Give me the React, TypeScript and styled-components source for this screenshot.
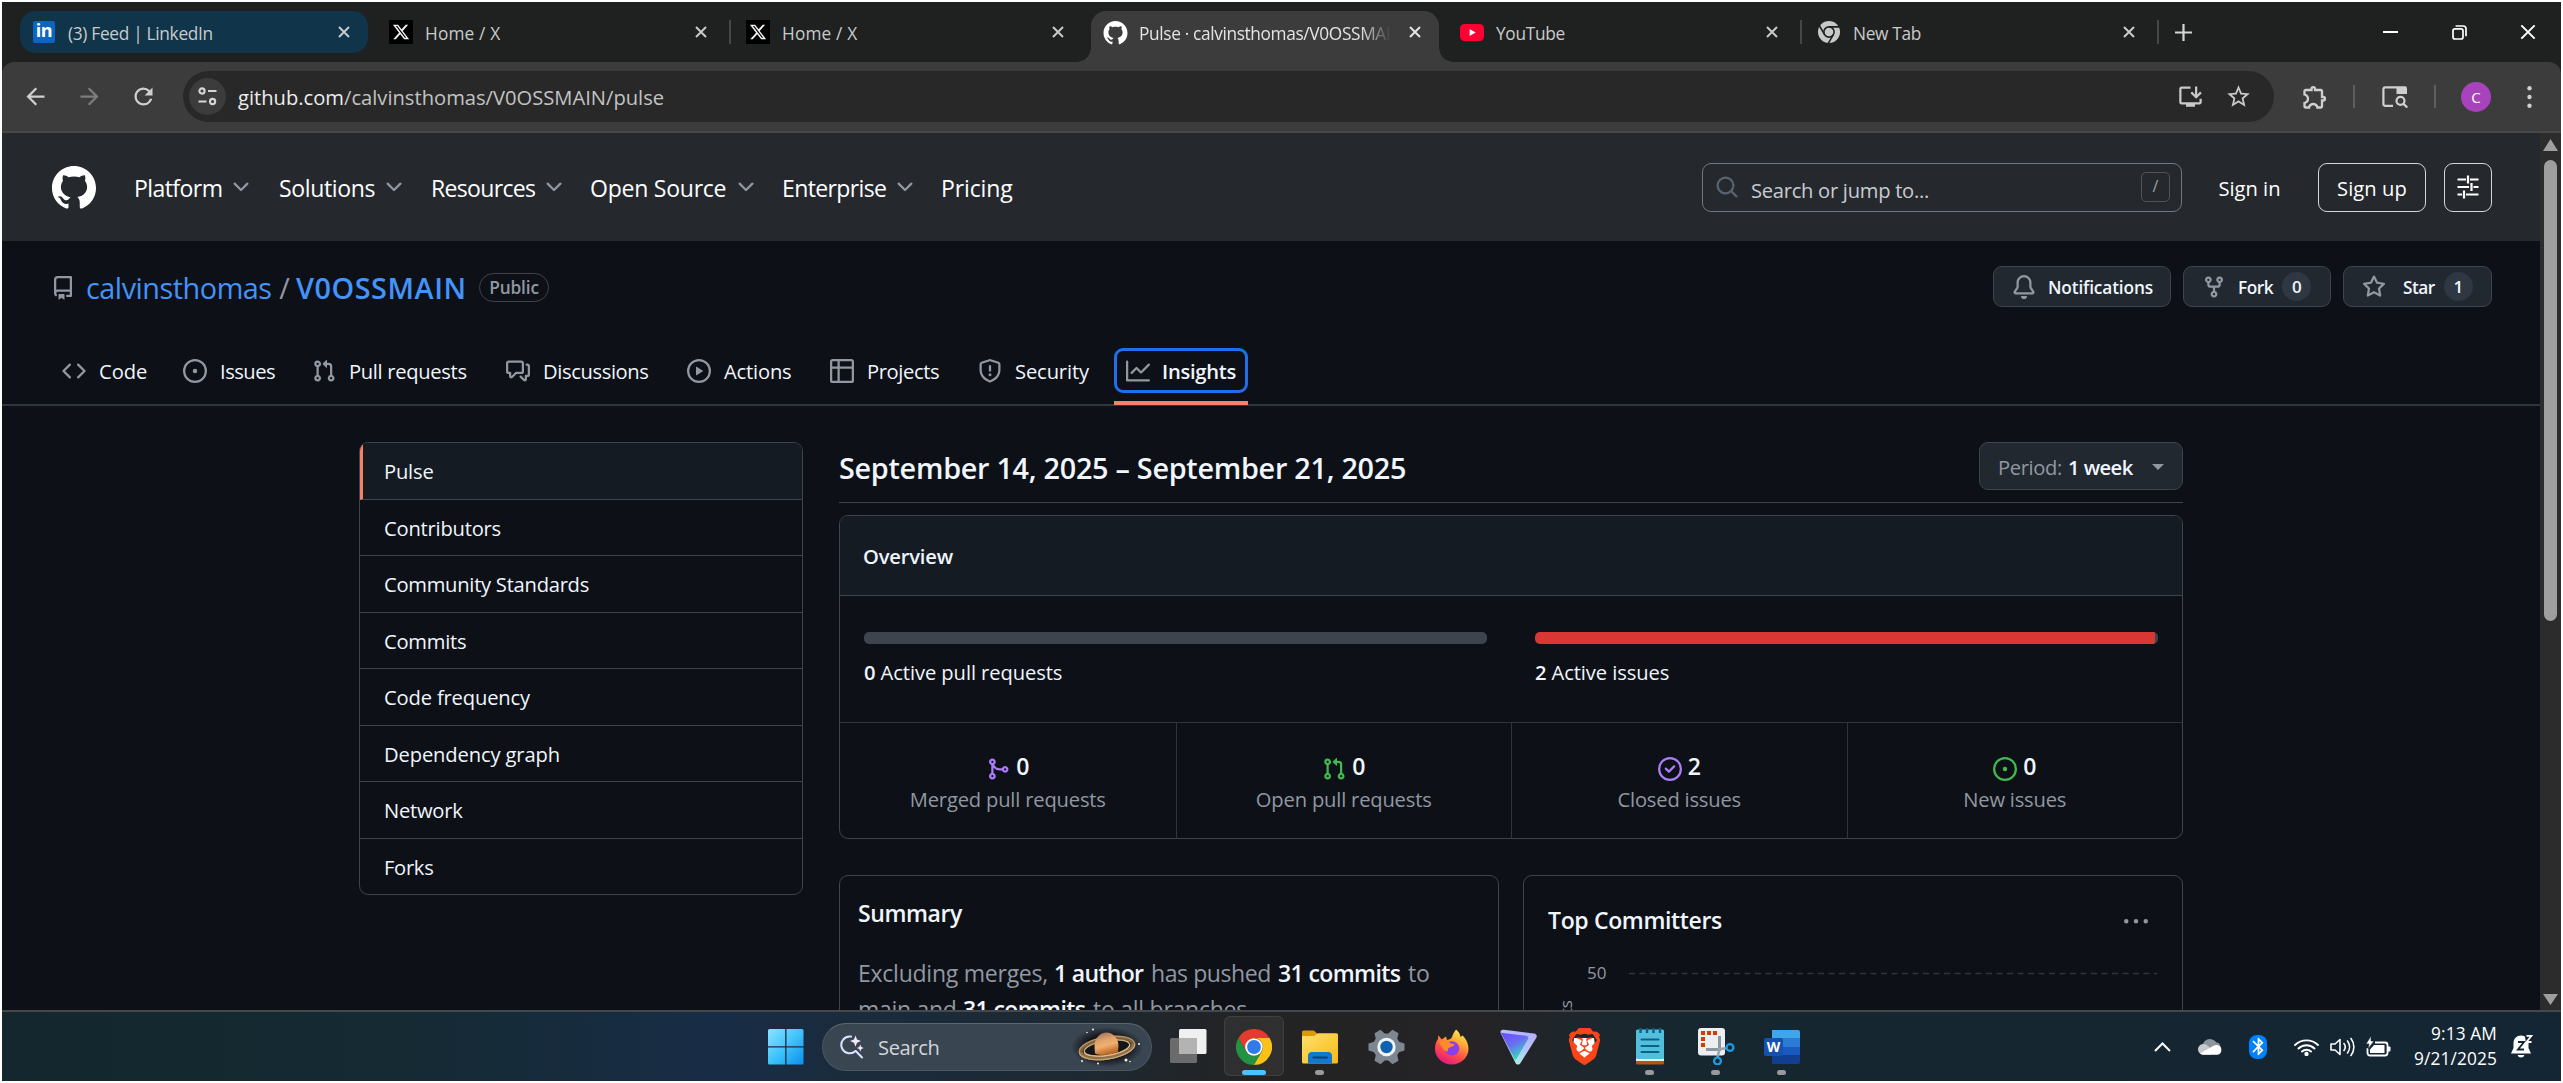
import React from 'react';
import styled, { createGlobalStyle, css } from 'styled-components';
import {
  MdArrowBack,
  MdArrowForward,
  MdRefresh,
  MdOutlineInstallDesktop,
  MdStarBorder,
  MdOutlineExtension,
  MdBluetooth,
} from 'react-icons/md';
import { FaXTwitter } from 'react-icons/fa6';
import { SiBrave } from 'react-icons/si';

/* ---------- base ---------- */

const GlobalStyle = createGlobalStyle`
  * { box-sizing: border-box; }
  body {
    margin: 0;
    background: #fff;
    font-family: "Open Sans", "Noto Sans", sans-serif;
    overflow: hidden;
  }
  svg { display: block; flex: none; }
`;

const Frame = styled.div`
  width: 2563px;
  height: 1083px;
  padding: 2px;
  display: flex;
  flex-direction: column;
  background: #fff;
`;

const Text = styled.span<{ $size: number; $ls?: number; $weight?: number; $color?: string; $w?: number }>`
  font-size: ${(p) => p.$size * 0.96}px;
  letter-spacing: ${(p) => p.$ls ?? 0}px;
  font-weight: ${(p) => p.$weight ?? 400};
  color: ${(p) => p.$color ?? 'inherit'};
  white-space: nowrap;
  ${(p) => p.$w !== undefined && css`width: ${p.$w}px; flex: none;`}
`;

/* ---------- octicons ---------- */

const paths = {
  mark: 'M10.226 17.284c-2.965-.36-5.054-2.493-5.054-5.256 0-1.123.404-2.336 1.078-3.144-.292-.741-.247-2.314.09-2.965.898-.112 2.111.36 2.83 1.01.853-.269 1.752-.404 2.853-.404 1.1 0 1.999.135 2.807.382.696-.629 1.932-1.1 2.83-.988.315.606.36 2.179.067 2.942.72.854 1.101 2 1.101 3.167 0 2.763-2.089 4.852-5.098 5.234.763.494 1.28 1.572 1.28 2.807v2.336c0 .674.561 1.056 1.235.786 4.066-1.55 7.255-5.615 7.255-10.646C23.5 6.188 18.334 1 11.978 1 5.62 1 .5 6.188.5 12.545c0 4.986 3.167 9.12 7.435 10.669.606.225 1.19-.18 1.19-.786V20.63a2.9 2.9 0 0 1-1.078.224c-1.483 0-2.359-.808-2.987-2.313-.247-.607-.517-.966-1.034-1.033-.27-.023-.359-.135-.359-.27 0-.27.45-.471.898-.471.652 0 1.213.404 1.797 1.235.45.651.921.943 1.483.943.561 0 .92-.202 1.437-.719.382-.381.674-.718.944-.943',
  repo: 'M2 2.5A2.5 2.5 0 0 1 4.5 0h8.75a.75.75 0 0 1 .75.75v12.5a.75.75 0 0 1-.75.75h-2.5a.75.75 0 0 1 0-1.5h1.75v-2h-8a1 1 0 0 0-.714 1.7.75.75 0 1 1-1.072 1.05A2.495 2.495 0 0 1 2 11.5Zm10.5-1h-8a1 1 0 0 0-1 1v6.708A2.486 2.486 0 0 1 4.5 9h8ZM5 12.25a.25.25 0 0 1 .25-.25h3.5a.25.25 0 0 1 .25.25v3.25a.25.25 0 0 1-.4.2l-1.45-1.087a.249.249 0 0 0-.3 0L5.4 15.7a.25.25 0 0 1-.4-.2Z',
  code: 'm11.28 3.22 4.25 4.25a.75.75 0 0 1 0 1.06l-4.25 4.25a.749.749 0 0 1-1.275-.326.749.749 0 0 1 .215-.734L13.94 8l-3.72-3.72a.749.749 0 0 1 .326-1.275.749.749 0 0 1 .734.215Zm-6.56 0a.751.751 0 0 1 1.042.018.751.751 0 0 1 .018 1.042L2.06 8l3.72 3.72a.749.749 0 0 1-.326 1.275.749.749 0 0 1-.734-.215L.47 8.53a.75.75 0 0 1 0-1.06Z',
  issue: 'M8 9.5a1.5 1.5 0 1 0 0-3 1.5 1.5 0 0 0 0 3ZM8 0a8 8 0 1 1 0 16A8 8 0 0 1 8 0ZM1.5 8a6.5 6.5 0 1 0 13 0 6.5 6.5 0 0 0-13 0Z',
  pull: 'M1.5 3.25a2.25 2.25 0 1 1 3 2.122v5.256a2.251 2.251 0 1 1-1.5 0V5.372A2.25 2.25 0 0 1 1.5 3.25Zm5.677-.177L9.573.677A.25.25 0 0 1 10 .854V2.5h1A2.5 2.5 0 0 1 13.5 5v5.628a2.251 2.251 0 1 1-1.5 0V5a1 1 0 0 0-1-1h-1v1.646a.25.25 0 0 1-.427.177L7.177 3.427a.25.25 0 0 1 0-.354ZM3.75 2.5a.75.75 0 1 0 0 1.5.75.75 0 0 0 0-1.5Zm0 9.5a.75.75 0 1 0 0 1.5.75.75 0 0 0 0-1.5Zm8.25.75a.75.75 0 1 0 1.5 0 .75.75 0 0 0-1.5 0Z',
  discussion: 'M1.75 1h8.5c.966 0 1.75.784 1.75 1.75v5.5A1.75 1.75 0 0 1 10.25 10H7.061l-2.574 2.573A1.458 1.458 0 0 1 2 11.543V10h-.25A1.75 1.75 0 0 1 0 8.25v-5.5C0 1.784.784 1 1.75 1ZM1.5 2.75v5.5c0 .138.112.25.25.25h1a.75.75 0 0 1 .75.75v2.19l2.72-2.72a.749.749 0 0 1 .53-.22h3.5a.25.25 0 0 0 .25-.25v-5.5a.25.25 0 0 0-.25-.25h-8.5a.25.25 0 0 0-.25.25Zm13 2a.25.25 0 0 0-.25-.25h-.5a.75.75 0 0 1 0-1.5h.5c.966 0 1.75.784 1.75 1.75v5.5A1.75 1.75 0 0 1 14.25 12H14v1.543a1.458 1.458 0 0 1-2.487 1.03L9.22 12.28a.749.749 0 0 1 .326-1.275.749.749 0 0 1 .734.215l2.22 2.22v-2.19a.75.75 0 0 1 .75-.75h1a.25.25 0 0 0 .25-.25Z',
  play: 'M8 0a8 8 0 1 1 0 16A8 8 0 0 1 8 0ZM1.5 8a6.5 6.5 0 1 0 13 0 6.5 6.5 0 0 0-13 0Zm4.879-2.773 4.264 2.559a.25.25 0 0 1 0 .428l-4.264 2.559A.25.25 0 0 1 6 10.559V5.442a.25.25 0 0 1 .379-.215Z',
  table: 'M0 1.75C0 .784.784 0 1.75 0h12.5C15.216 0 16 .784 16 1.75v12.5A1.75 1.75 0 0 1 14.25 16H1.75A1.75 1.75 0 0 1 0 14.25ZM6.5 6.5v8h7.75a.25.25 0 0 0 .25-.25V6.5Zm8-1.5V1.75a.25.25 0 0 0-.25-.25H6.5V5Zm-13 1.5v7.75c0 .138.112.25.25.25H5v-8ZM5 5V1.5H1.75a.25.25 0 0 0-.25.25V5Z',
  shield: 'M7.467.133a1.748 1.748 0 0 1 1.066 0l5.25 1.68A1.75 1.75 0 0 1 15 3.48V7c0 1.566-.32 3.182-1.303 4.682-.983 1.498-2.585 2.813-5.032 3.855a1.697 1.697 0 0 1-1.33 0c-2.447-1.042-4.049-2.357-5.032-3.855C1.32 10.182 1 8.566 1 7V3.48a1.75 1.75 0 0 1 1.217-1.667Zm.61 1.429a.25.25 0 0 0-.153 0l-5.25 1.68a.25.25 0 0 0-.174.238V7c0 1.358.275 2.666 1.057 3.86.784 1.194 2.121 2.34 4.366 3.297a.196.196 0 0 0 .154 0c2.245-.956 3.582-2.104 4.366-3.298C13.225 9.666 13.5 8.36 13.5 7V3.48a.251.251 0 0 0-.174-.237l-5.25-1.68ZM8.75 4.75v3a.75.75 0 0 1-1.5 0v-3a.75.75 0 0 1 1.5 0ZM9 10.5a1 1 0 1 1-2 0 1 1 0 0 1 2 0Z',
  graph: 'M1.5 1.75V13.5h13.75a.75.75 0 0 1 0 1.5H.75a.75.75 0 0 1-.75-.75V1.75a.75.75 0 0 1 1.5 0Zm14.28 2.53-5.25 5.25a.75.75 0 0 1-1.06 0L7 7.06 4.28 9.78a.751.751 0 0 1-1.042-.018.751.751 0 0 1-.018-1.042l3.25-3.25a.75.75 0 0 1 1.06 0L10 7.94l4.72-4.72a.751.751 0 0 1 1.042.018.751.751 0 0 1 .018 1.042Z',
  bell: 'M8 16a2 2 0 0 0 1.985-1.75c.017-.137-.097-.25-.235-.25h-3.5c-.138 0-.252.113-.235.25A2 2 0 0 0 8 16ZM3 5a5 5 0 0 1 10 0v2.947c0 .05.015.098.042.139l1.703 2.555A1.519 1.519 0 0 1 13.482 13H2.518a1.516 1.516 0 0 1-1.263-2.36l1.703-2.554A.255.255 0 0 0 3 7.947Zm5-3.5A3.5 3.5 0 0 0 4.5 5v2.947c0 .346-.102.683-.294.97l-1.703 2.556a.017.017 0 0 0-.003.01l.001.006c0 .002.002.004.004.006l.006.004.007.001h10.964l.007-.001.006-.004.004-.006.001-.007a.017.017 0 0 0-.003-.01l-1.703-2.554a1.745 1.745 0 0 1-.294-.97V5A3.5 3.5 0 0 0 8 1.5Z',
  fork: 'M5 5.372v.878c0 .414.336.75.75.75h4.5a.75.75 0 0 0 .75-.75v-.878a2.25 2.25 0 1 1 1.5 0v.878a2.25 2.25 0 0 1-2.25 2.25h-1.5v2.128a2.251 2.251 0 1 1-1.5 0V8.5h-1.5A2.25 2.25 0 0 1 3.5 6.25v-.878a2.25 2.25 0 1 1 1.5 0ZM5 3.25a.75.75 0 1 0-1.5 0 .75.75 0 0 0 1.5 0Zm6.75.75a.75.75 0 1 0 0-1.5.75.75 0 0 0 0 1.5Zm-3 8.75a.75.75 0 1 0-1.5 0 .75.75 0 0 0 1.5 0Z',
  star: 'M8 .25a.75.75 0 0 1 .673.418l1.882 3.815 4.21.612a.75.75 0 0 1 .416 1.279l-3.046 2.97.719 4.192a.751.751 0 0 1-1.088.791L8 12.347l-3.766 1.98a.75.75 0 0 1-1.088-.79l.72-4.194L.818 6.374a.75.75 0 0 1 .416-1.28l4.21-.611L7.327.668A.75.75 0 0 1 8 .25Zm0 2.445L6.615 5.5a.75.75 0 0 1-.564.41l-3.097.45 2.24 2.184a.75.75 0 0 1 .216.664l-.528 3.084 2.769-1.456a.75.75 0 0 1 .698 0l2.77 1.456-.53-3.084a.75.75 0 0 1 .216-.664l2.24-2.183-3.096-.45a.75.75 0 0 1-.564-.41L8 2.694Z',
  chevron: 'M12.78 5.22a.749.749 0 0 1 0 1.06l-4.25 4.25a.749.749 0 0 1-1.06 0L3.22 6.28a.749.749 0 1 1 1.06-1.06L8 8.939l3.72-3.719a.749.749 0 0 1 1.06 0Z',
  search: 'M10.68 11.74a6 6 0 0 1-7.922-8.982 6 6 0 0 1 8.982 7.922l3.04 3.04a.749.749 0 0 1-.326 1.275.749.749 0 0 1-.734-.215ZM11.5 7a4.499 4.499 0 1 0-8.997 0A4.499 4.499 0 0 0 11.5 7Z',
  merge: 'M5.45 5.154A4.25 4.25 0 0 0 9.25 7.5h1.378a2.251 2.251 0 1 1 0 1.5H9.25A5.734 5.734 0 0 1 5 7.123v3.505a2.25 2.25 0 1 1-1.5 0V5.372a2.25 2.25 0 1 1 1.95-.218ZM4.25 13.5a.75.75 0 1 0 0-1.5.75.75 0 0 0 0 1.5Zm8.5-4.5a.75.75 0 1 0 0-1.5.75.75 0 0 0 0 1.5ZM5 3.25a.75.75 0 1 0 0 .005V3.25Z',
  closed: 'M11.28 6.78a.75.75 0 0 0-1.06-1.06L7.25 8.69 5.78 7.22a.75.75 0 0 0-1.06 1.06l2 2a.75.75 0 0 0 1.06 0l3.5-3.5ZM16 8A8 8 0 1 1 0 8a8 8 0 0 1 16 0Zm-1.5 0a6.5 6.5 0 1 0-13 0 6.5 6.5 0 0 0 13 0Z',
  kebab: 'M8 9a1.5 1.5 0 1 0 0-3 1.5 1.5 0 0 0 0 3ZM1.5 9a1.5 1.5 0 1 0 0-3 1.5 1.5 0 0 0 0 3Zm13 0a1.5 1.5 0 1 0 0-3 1.5 1.5 0 0 0 0 3Z',
};

type IconName = keyof typeof paths;

const Octicon = ({ name, size = 24, color = '#9198a1' }: { name: IconName; size?: number; color?: string }) => (
  <svg width={size} height={size} viewBox={name === 'mark' ? '0 0 24 24' : '0 0 16 16'} fill={color}>
    <path d={paths[name]} />
  </svg>
);

/* ---------- tab strip ---------- */

const TabStrip = styled.div`
  height: 60px;
  flex: none;
  background: #1f2121;
  padding-left: 18px;
  display: flex;
  align-items: flex-start;
  color: #c9cbcb;
`;

const TabSlot = styled.div`
  width: 357px;
  height: 60px;
  padding-top: 9px;
  display: flex;
  align-items: flex-start;
`;

const TabBody = styled.div<{ $tint?: boolean; $active?: boolean }>`
  position: relative;
  width: 348px;
  height: ${(p) => (p.$active ? 51 : 42)}px;
  padding: 0 0 ${(p) => (p.$active ? 9 : 0)}px 12px;
  display: flex;
  align-items: center;
  border-radius: ${(p) => (p.$active ? '15px 15px 0 0' : '15px')};
  background: ${(p) => (p.$active ? '#3c3c3c' : p.$tint ? '#10344a' : 'transparent')};
  color: ${(p) => (p.$active ? '#e3e3e3' : '#c9cbcb')};
  ${(p) =>
    p.$active &&
    css`
      &::before,
      &::after {
        content: '';
        position: absolute;
        bottom: 0;
        width: 14px;
        height: 14px;
      }
      &::before {
        left: -14px;
        background: radial-gradient(circle at 0 0, transparent 13.5px, #3c3c3c 14px);
      }
      &::after {
        right: -14px;
        background: radial-gradient(circle at 100% 0, transparent 13.5px, #3c3c3c 14px);
      }
    `}
`;

const Favicon = styled.div`
  width: 24px;
  height: 24px;
  margin-right: 12px;
  display: flex;
  align-items: center;
  justify-content: center;
`;

const XMark = styled(Favicon)`
  background: #000;
  color: #f2f2f2;
`;

const LinkedInMark = styled.div`
  width: 22px;
  height: 22px;
  border-radius: 2px;
  background: #0a66c2;
  color: #fff;
  font-weight: 700;
  font-size: 18px;
  line-height: 19px;
  letter-spacing: -0.5px;
  text-align: center;
`;

const TabTitle = styled.div<{ $fade?: boolean }>`
  width: 252px;
  margin-right: 12px;
  padding-top: 3px;
  overflow: hidden;
  white-space: nowrap;
  line-height: 26px;
  ${(p) => p.$fade && css`mask-image: linear-gradient(90deg, #000 88%, transparent 100%);`}
`;

const CloseBox = styled.div`
  width: 24px;
  height: 24px;
  display: flex;
  align-items: center;
  justify-content: center;
`;

const TabDivider = styled.div`
  width: 2px;
  height: 24px;
  margin: 9px 0 0 4px;
  background: #454747;
`;

const NewTabButton = styled.div`
  width: 42px;
  height: 60px;
  display: flex;
  align-items: center;
  justify-content: center;
`;

const WindowControls = styled.div`
  margin-left: auto;
  display: flex;
  height: 60px;
  color: #fff;
`;

const WindowButton = styled.div`
  width: 69px;
  height: 60px;
  padding-left: 3px;
  display: flex;
  align-items: center;
  justify-content: center;
`;

const Cross = ({ size = 12, stroke = 2 }: { size?: number; stroke?: number }) => (
  <svg width={size} height={size} viewBox="0 0 12 12" stroke="currentColor" strokeWidth={stroke} fill="none">
    <path d="M1 1l10 10M11 1L1 11" />
  </svg>
);

const ChromeGray = () => (
  <svg width="22" height="22" viewBox="0 0 24 24">
    <circle cx="12" cy="12" r="12" fill="#c7c9c9" />
    <g stroke="#1f2121" strokeWidth="1.7" fill="none">
      <circle cx="12" cy="12" r="5.6" />
      <path d="M12 6.4h11M7.2 14.8L1.6 5.2M16.8 14.8l-5.6 9.6" />
    </g>
  </svg>
);

const tabs: {
  title: string;
  ls: number;
  icon: React.ReactNode;
  tint?: boolean;
  active?: boolean;
  divider?: boolean;
}[] = [
  { title: '(3) Feed | LinkedIn', ls: -0.3, icon: <Favicon><LinkedInMark>in</LinkedInMark></Favicon>, tint: true },
  { title: 'Home / X', ls: 0.15, icon: <XMark><FaXTwitter size={18} /></XMark>, divider: true },
  { title: 'Home / X', ls: 0.15, icon: <XMark><FaXTwitter size={18} /></XMark> },
  { title: 'Pulse · calvinsthomas/V0OSSMAIN', ls: -0.35, icon: <Favicon><Octicon name="mark" size={25} color="#fff" /></Favicon>, active: true },
  {
    title: 'YouTube',
    ls: -0.29,
    icon: (
      <Favicon>
        <svg width="24" height="17" viewBox="0 0 24 17">
          <rect width="24" height="17" rx="4.5" fill="#ff0033" />
          <path d="M9.6 4.9v7.2l6-3.6z" fill="#fff" />
        </svg>
      </Favicon>
    ),
    divider: true,
  },
  { title: 'New Tab', ls: -0.33, icon: <Favicon><ChromeGray /></Favicon>, divider: true },
];

const Tabs = () => (
  <TabStrip>
    {tabs.map((t, i) => (
      <TabSlot key={i}>
        <TabBody $tint={t.tint} $active={t.active}>
          {t.icon}
          <TabTitle $fade={t.active}>
            <Text $size={18} $ls={t.ls}>{t.title}</Text>
          </TabTitle>
          <CloseBox><Cross /></CloseBox>
        </TabBody>
        {t.divider && <TabDivider />}
      </TabSlot>
    ))}
    <NewTabButton>
      <svg width="17" height="17" viewBox="0 0 17 17" stroke="#d6d6d6" strokeWidth="2.2">
        <path d="M8.5 0v17M0 8.5h17" />
      </svg>
    </NewTabButton>
    <WindowControls>
      <WindowButton>
        <svg width="15" height="2" viewBox="0 0 15 2"><rect width="15" height="2" fill="#fff" /></svg>
      </WindowButton>
      <WindowButton>
        <svg width="15" height="15" viewBox="0 0 15 15" stroke="#fff" strokeWidth="1.7" fill="none">
          <rect x="1" y="3.8" width="10" height="10.2" rx="2" />
          <path d="M3.6 1h7.6A2.8 2.8 0 0 1 14 3.8v7.4" />
        </svg>
      </WindowButton>
      <WindowButton><Cross size={16} stroke={1.5} /></WindowButton>
    </WindowControls>
  </TabStrip>
);

/* ---------- toolbar ---------- */

const ToolbarBack = styled.div`
  height: 71px;
  flex: none;
  background: #1f2121;
`;

const Toolbar = styled.div`
  height: 71px;
  border-bottom: 2px solid #484848;
  border-radius: 12px 12px 0 0;
  background: #3c3c3c;
  color: #c9c9c9;
  display: flex;
  align-items: center;
  padding-left: 6px;
`;

const ToolSlot = styled.div<{ $w: number; $dim?: boolean }>`
  width: ${(p) => p.$w}px;
  flex: none;
  display: flex;
  justify-content: center;
  color: ${(p) => (p.$dim ? '#7d7d7d' : '#cfcfcf')};
`;

const Omnibox = styled.div`
  width: 2091px;
  height: 51px;
  margin: 0 21px 0 13px;
  padding: 0 22px 0 6px;
  border-radius: 26px;
  background: #282828;
  display: flex;
  align-items: center;
`;

const SiteInfo = styled.div`
  width: 37px;
  height: 37px;
  margin-right: 12px;
  border-radius: 50%;
  background: #3c3c3c;
  display: flex;
  align-items: center;
  justify-content: center;
`;

const Url = styled.div`
  flex: 1;
  color: #c3c3c3;
  & b { font-weight: 400; color: #ececec; }
`;

const OmniActions = styled.div`
  display: flex;
  gap: 21px;
`;

const ToolDivider = styled.div`
  width: 2px;
  height: 23px;
  background: #5e5e5e;
`;

const Avatar = styled.div`
  width: 30px;
  height: 30px;
  border-radius: 50%;
  background: #a943bd;
  color: #fff;
  font-size: 15px;
  line-height: 30px;
  text-align: center;
`;

const BrowserToolbar = () => (
  <ToolbarBack>
    <Toolbar>
      <ToolSlot $w={54}><MdArrowBack size={27} /></ToolSlot>
      <ToolSlot $w={54} $dim><MdArrowForward size={27} /></ToolSlot>
      <ToolSlot $w={54}><MdRefresh size={27} /></ToolSlot>
      <Omnibox>
        <SiteInfo>
          <svg width="19" height="19" viewBox="0 0 19 19" stroke="#d6d6d6" strokeWidth="2.1" fill="none">
            <circle cx="4" cy="4" r="2.6" />
            <path d="M10 4h8.5M0.5 14.5h8" />
            <circle cx="14.6" cy="14.5" r="2.6" />
          </svg>
        </SiteInfo>
        <Url>
          <Text $size={21}><b>github.com</b>/calvinsthomas/V0OSSMAIN/pulse</Text>
        </Url>
        <OmniActions>
          <MdOutlineInstallDesktop size={27} />
          <MdStarBorder size={27} />
        </OmniActions>
      </Omnibox>
      <ToolSlot $w={40}><MdOutlineExtension size={28} /></ToolSlot>
      <ToolSlot $w={37}><ToolDivider /></ToolSlot>
      <ToolSlot $w={46}>
        <svg width="26" height="22" viewBox="0 0 26 22" fill="none" stroke="currentColor" strokeWidth="2.2">
          <path d="M11 19.9H3.2A1.8 1.8 0 0 1 1.4 18V3.2A1.8 1.8 0 0 1 3.2 1.4H15" />
          <path d="M14.5.3H23a2 2 0 0 1 2 2V8H14.5z" fill="currentColor" stroke="none" />
          <circle cx="18.5" cy="14.8" r="4" />
          <path d="M21.3 17.6l4 4" />
        </svg>
      </ToolSlot>
      <ToolSlot $w={33}><ToolDivider /></ToolSlot>
      <ToolSlot $w={50}><Avatar>C</Avatar></ToolSlot>
      <ToolSlot $w={57}>
        <svg width="5" height="22" viewBox="0 0 5 22" fill="currentColor">
          <circle cx="2.5" cy="2.3" r="2.2" /><circle cx="2.5" cy="11" r="2.2" /><circle cx="2.5" cy="19.7" r="2.2" />
        </svg>
      </ToolSlot>
    </Toolbar>
  </ToolbarBack>
);

/* ---------- page shell ---------- */

const Viewport = styled.div`
  height: 877px;
  flex: none;
  display: flex;
  overflow: hidden;
  background: #0d1017;
`;

const Page = styled.div`
  width: 2538px;
  height: 877px;
  overflow: hidden;
  color: #f0f6fc;
`;

const ScrollTrack = styled.div`
  width: 21px;
  background: #2c2c2c;
  display: flex;
  flex-direction: column;
  align-items: center;
  padding: 6px 0 5px;
`;

const ScrollThumb = styled.div`
  width: 13px;
  height: 461px;
  margin: 9px 0 auto;
  border-radius: 7px;
  background: #9f9f9f;
`;

/* ---------- site header ---------- */

const SiteHeader = styled.header`
  height: 108px;
  background: #25292e;
  display: flex;
  align-items: center;
  padding: 0 48px 0 49px;
`;

const Logo = styled.div`
  width: 83px;
  padding-bottom: 1px;
`;

const MenuItem = styled.div<{ $w: number }>`
  width: ${(p) => p.$w}px;
  display: flex;
  align-items: center;
  gap: 7px;
  color: #fff;
  line-height: 36px;
  padding-top: 2px;
  & svg { margin-top: -2px; }
`;

const SearchBox = styled.div`
  width: 480px;
  height: 49px;
  margin: 0 36px 0 auto;
  padding: 0 11px 0 12px;
  border: 1.5px solid #6c7885;
  border-radius: 9px;
  display: flex;
  align-items: center;
  color: #c8ccd1;
`;

const SearchLabel = styled.div`
  flex: 1;
  padding: 5px 0 0 12px;
`;

const SlashKey = styled.div`
  width: 29px;
  height: 30px;
  border: 1.5px solid #4d545c;
  border-radius: 5px;
  color: #9aa0a6;
  font-size: 16px;
  line-height: 27px;
  text-align: center;
`;

const HeaderButton = styled.div<{ $w: number; $bare?: boolean; $ml?: number; $pt?: number }>`
  width: ${(p) => p.$w}px;
  height: 49px;
  margin-left: ${(p) => p.$ml ?? 0}px;
  padding-top: ${(p) => p.$pt ?? 0}px;
  border: ${(p) => (p.$bare ? '0' : '1.5px solid #d1d7e0')};
  border-radius: 9px;
  display: flex;
  align-items: center;
  justify-content: center;
  color: #fff;
`;

const menu = [
  { label: 'Platform', w: 145, tw: 88, ls: -0.58 },
  { label: 'Solutions', w: 152, tw: 96, ls: -0.36 },
  { label: 'Resources', w: 159, tw: 104, ls: -0.68 },
  { label: 'Open Source', w: 192, tw: 137, ls: -0.25 },
  { label: 'Enterprise', w: 159, tw: 104, ls: -0.63 },
];

const Header = () => (
  <SiteHeader>
    <Logo><Octicon name="mark" size={46} color="#fff" /></Logo>
    {menu.map((m) => (
      <MenuItem key={m.label} $w={m.w}>
        <Text $size={24} $ls={m.ls} $w={m.tw}>{m.label}</Text>
        <Octicon name="chevron" color="#9198a1" />
      </MenuItem>
    ))}
    <MenuItem $w={80}><Text $size={24} $ls={-0.15}>Pricing</Text></MenuItem>
    <SearchBox>
      <Octicon name="search" color="#59636e" />
      <SearchLabel><Text $size={21} $ls={-0.28}>Search or jump to...</Text></SearchLabel>
      <SlashKey>/</SlashKey>
    </SearchBox>
    <HeaderButton $w={63} $bare $pt={1}><Text $size={21} $ls={-0.02}>Sign in</Text></HeaderButton>
    <HeaderButton $w={108} $ml={37} $pt={1}><Text $size={21} $ls={0.09}>Sign up</Text></HeaderButton>
    <HeaderButton $w={48} $ml={18}>
      <svg width="22" height="24" viewBox="0 0 22 24" stroke="#fff" strokeWidth="2.2" fill="none">
        <path d="M.5 4.500H9M13 4.500h8.500M11 .5v8M.5 12H12M16.500 12h5M14.500 8v8M.5 19.500H5M9 19.500h12.500M7 15.500v8" />
      </svg>
    </HeaderButton>
  </SiteHeader>
);

/* ---------- repository header ---------- */

const RepoTop = styled.div`
  display: flex;
  align-items: center;
  height: 67px;
  padding: 24px 48px 0 49px;
`;

const RepoGlyph = styled.div`
  padding-top: 2px;
`;

const RepoTitle = styled.div`
  display: flex;
  align-items: center;
  line-height: 43px;
  color: #4493f8;
  padding-top: 2px;
`;

const OwnerName = styled(Text)`
  width: 187px;
  margin-left: 11px;
`;

const Slash = styled(Text)`
  width: 23px;
  text-align: center;
`;

const PublicBadge = styled.div`
  width: 70px;
  height: 29px;
  margin: 2px 0 0 12px;
  border: 1px solid #3d444d;
  border-radius: 15px;
  display: flex;
  align-items: center;
  justify-content: center;
  color: #9198a1;
`;

const RepoActions = styled.div`
  margin-left: auto;
  display: flex;
  gap: 12px;
`;

const RepoButton = styled.div<{ $w: number; $gap: number }>`
  width: ${(p) => p.$w}px;
  height: 41px;
  padding-left: 18px;
  border: 1px solid #3d444d;
  border-radius: 9px;
  background: #212830;
  display: flex;
  align-items: center;
  & > span { margin-left: ${(p) => p.$gap}px; padding-top: 2px; }
`;

const Counter = styled.div`
  width: 29px;
  height: 29px;
  margin-left: 9px;
  border-radius: 50%;
  background: #2f3742;
  font-size: 17px;
  font-weight: 600;
  line-height: 29px;
  text-align: center;
`;

const RepoNav = styled.nav`
  height: 98px;
  padding: 40px 0 0 60px;
  border-bottom: 2px solid #30363d;
  display: flex;
  align-items: flex-start;
`;

const RepoTab = styled.div<{ $w: number; $current?: boolean }>`
  position: relative;
  width: ${(p) => p.$w}px;
  height: 45px;
  display: flex;
  align-items: center;
  gap: ${(p) => (p.$current ? 12 : 13)}px;
  & > span { padding-top: 1px; }
  ${(p) =>
    p.$current &&
    css`
      margin-left: -12px;
      padding-left: 9px;
      border: 3px solid #1f6feb;
      border-radius: 9px;
      &::after {
        content: '';
        position: absolute;
        left: -3px;
        right: -3px;
        bottom: -15px;
        height: 4px;
        background: #f78166;
      }
    `}
`;

const repoTabs: { label: string; icon: IconName; w: number; ls: number; current?: boolean }[] = [
  { label: 'Code', icon: 'code', w: 121, ls: -0.05 },
  { label: 'Issues', icon: 'issue', w: 129, ls: -0.5 },
  { label: 'Pull requests', icon: 'pull', w: 194, ls: -0.32 },
  { label: 'Discussions', icon: 'discussion', w: 181, ls: -0.38 },
  { label: 'Actions', icon: 'play', w: 143, ls: -0.18 },
  { label: 'Projects', icon: 'table', w: 148, ls: -0.4 },
  { label: 'Security', icon: 'shield', w: 148, ls: -0.13 },
  { label: 'Insights', icon: 'graph', w: 134, ls: -0.27, current: true },
];

const RepoHeader = () => (
  <>
    <RepoTop>
      <RepoGlyph><Octicon name="repo" /></RepoGlyph>
      <RepoTitle>
        <OwnerName $size={30} $ls={-0.47}>calvinsthomas</OwnerName>
        <Slash $size={30} $color="#9198a1">/</Slash>
        <Text $size={30} $weight={600} $ls={0.55} $w={171}>V0OSSMAIN</Text>
      </RepoTitle>
      <PublicBadge><Text $size={18} $ls={-0.15} $weight={600}>Public</Text></PublicBadge>
      <RepoActions>
        <RepoButton $w={178} $gap={12}>
          <Octicon name="bell" />
          <Text $size={18} $weight={600} $ls={-0.15}>Notifications</Text>
        </RepoButton>
        <RepoButton $w={148} $gap={12}>
          <Octicon name="fork" />
          <Text $size={18} $weight={600} $ls={-0.45}>Fork</Text>
          <Counter>0</Counter>
        </RepoButton>
        <RepoButton $w={149} $gap={17}>
          <Octicon name="star" />
          <Text $size={18} $weight={600} $ls={-0.5}>Star</Text>
          <Counter>1</Counter>
        </RepoButton>
      </RepoActions>
    </RepoTop>
    <RepoNav>
      {repoTabs.map((t) => (
        <RepoTab key={t.label} $w={t.w} $current={t.current}>
          <Octicon name={t.icon} />
          <Text $size={21} $ls={t.ls} $weight={t.current ? 600 : 400}>{t.label}</Text>
        </RepoTab>
      ))}
    </RepoNav>
  </>
);

/* ---------- insights body ---------- */

const Body = styled.div`
  display: flex;
  align-items: flex-start;
  padding: 36px 0 0 357px;
  gap: 36px;
`;

const SideMenu = styled.div`
  width: 444px;
  height: 453px;
  border: 1px solid #3d444d;
  border-radius: 9px;
  overflow: hidden;
`;

const SideItem = styled.div<{ $current?: boolean }>`
  height: 57px;
  padding-left: ${(p) => (p.$current ? 21 : 24)}px;
  border-bottom: 1px solid #3d444d;
  display: flex;
  align-items: center;
  &:nth-child(even) { height: 56px; }
  &:last-child { height: 55px; border-bottom: 0; }
  ${(p) => p.$current && css`background: #151b23; border-left: 3px solid #f78166;`}
`;

const Main = styled.main`
  width: 1344px;
`;

const TitleRow = styled.div`
  height: 61px;
  margin-bottom: 12px;
  border-bottom: 1px solid #3d444d;
  display: flex;
  align-items: flex-start;
  justify-content: space-between;
`;

const TitleText = styled(Text)`
  line-height: 51px;
`;

const PeriodButton = styled.div`
  width: 204px;
  height: 48px;
  padding: 0 18px 0 18px;
  border: 1px solid #3d444d;
  border-radius: 9px;
  background: #212830;
  display: flex;
  align-items: center;
  & > span { padding-top: 2px; }
  & svg { margin: 1px 0 0 auto; }
`;

const PeriodKey = styled(Text)`
  width: 70px;
`;

const Overview = styled.section`
  border: 1px solid #3d444d;
  border-radius: 9px;
  overflow: hidden;
  height: 324px;
`;

const OverviewHead = styled.div`
  height: 80px;
  padding-left: 23px;
  border-bottom: 1px solid #3d444d;
  background: #151b23;
  display: flex;
  align-items: center;
`;

const Bars = styled.div`
  height: 126px;
  padding: 36px 24px 0 24px;
  display: flex;
  gap: 48px;
`;

const BarColumn = styled.div`
  width: 623px;
`;

const Bar = styled.div<{ $red?: boolean }>`
  height: 12px;
  border-radius: 5px;
  margin-bottom: 14px;
  background: ${(p) => (p.$red ? 'linear-gradient(90deg, #da3633 620px, #3d444d 620px)' : '#3d444d')};
`;

const BarLabel = styled.div`
  line-height: 28px;
  & strong { font-weight: 600; }
`;

const Cells = styled.div`
  height: 116px;
  border-top: 1px solid #2f353d;
  display: grid;
  grid-template-columns: repeat(4, 1fr);
`;

const Cell = styled.div`
  padding-top: 27px;
  display: flex;
  flex-direction: column;
  align-items: center;
  &:not(:first-child) { border-left: 1px solid #2f353d; }
`;

const CellCount = styled.div`
  height: 34px;
  display: flex;
  align-items: center;
  gap: 6px;
  & svg { margin-top: 4px; }
  & span { margin-top: -3px; }
`;

const CellLabel = styled.div`
  line-height: 31px;
  color: #9198a1;
`;

const Cards = styled.div`
  margin-top: 36px;
  display: flex;
  gap: 24px;
`;

const Card = styled.section<{ $pad: string }>`
  width: 660px;
  height: 400px;
  padding: ${(p) => p.$pad};
  border: 1px solid #3d444d;
  border-radius: 9px;
`;

const CardTitle = styled.div`
  line-height: 36px;
  display: flex;
  align-items: center;
  justify-content: space-between;
  & svg { margin-top: 3px; }
`;

const Paragraph = styled.div`
  margin-top: 24px;
  color: #9198a1;
  line-height: 36px;
`;

const Line = styled.div`
  display: flex;
  height: 36px;
`;

const Chart = styled.svg`
  margin-top: 3px;
  overflow: visible;
  & text {
    font-family: "Open Sans", sans-serif;
    font-size: 17px;
    fill: #9198a1;
  }
`;

const sideItems: [string, number][] = [
  ['Pulse', -0.2],
  ['Contributors', -0.21],
  ['Community Standards', -0.26],
  ['Commits', -0.25],
  ['Code frequency', -0.16],
  ['Dependency graph', -0.13],
  ['Network', -0.25],
  ['Forks', -0.3],
];

const cells: { icon: IconName; color: string; count: number; label: string; ls: number }[] = [
  { icon: 'merge', color: '#ab7df8', count: 0, label: 'Merged pull requests', ls: -0.18 },
  { icon: 'pull', color: '#3fb950', count: 0, label: 'Open pull requests', ls: -0.18 },
  { icon: 'closed', color: '#ab7df8', count: 2, label: 'Closed issues', ls: -0.2 },
  { icon: 'issue', color: '#3fb950', count: 0, label: 'New issues', ls: -0.2 },
];

const Insights = () => (
  <Body>
    <SideMenu>
      {sideItems.map(([label, ls], i) => (
        <SideItem key={label} $current={i === 0}>
          <Text $size={21} $ls={ls}>{label}</Text>
        </SideItem>
      ))}
    </SideMenu>
    <Main>
      <TitleRow>
        <TitleText $size={30} $weight={600} $ls={-0.28}>September 14, 2025 – September 21, 2025</TitleText>
        <PeriodButton>
          <PeriodKey $size={21} $ls={-0.36} $color="#9198a1">Period:</PeriodKey>
          <Text $size={21} $ls={-0.55} $weight={600}>1 week</Text>
          <svg width="12" height="6" viewBox="0 0 12 6"><path d="M0 0h12L6 6z" fill="#9198a1" /></svg>
        </PeriodButton>
      </TitleRow>
      <Overview>
        <OverviewHead><Text $size={21} $weight={600} $ls={-0.17}>Overview</Text></OverviewHead>
        <Bars>
          <BarColumn>
            <Bar />
            <BarLabel><Text $size={21} $ls={-0.08}><strong>0</strong> Active pull requests</Text></BarLabel>
          </BarColumn>
          <BarColumn>
            <Bar $red />
            <BarLabel><Text $size={21} $ls={-0.1}><strong>2</strong> Active issues</Text></BarLabel>
          </BarColumn>
        </Bars>
        <Cells>
          {cells.map((c) => (
            <Cell key={c.label}>
              <CellCount>
                <Octicon name={c.icon} color={c.color} />
                <Text $size={24} $weight={600}>{c.count}</Text>
              </CellCount>
              <CellLabel><Text $size={21} $ls={c.ls}>{c.label}</Text></CellLabel>
            </Cell>
          ))}
        </Cells>
      </Overview>
      <Cards>
        <Card $pad="19px 18px">
          <CardTitle><Text $size={24} $weight={600} $ls={-0.44}>Summary</Text></CardTitle>
          <Paragraph>
            <Line>
              <Text $size={24} $ls={-0.26} $w={196}>Excluding merges,</Text>
              <Text $size={24} $ls={-0.7} $weight={600} $color="#f0f6fc" $w={97}>1 author</Text>
              <Text $size={24} $ls={-0.43} $w={127}>has pushed</Text>
              <Text $size={24} $ls={-0.62} $weight={600} $color="#f0f6fc" $w={130}>31 commits</Text>
              <Text $size={24} $ls={-0.2}>to</Text>
            </Line>
            <Line>
              <Text $size={24} $ls={-0.3} $w={105}>main and</Text>
              <Text $size={24} $ls={-0.62} $weight={600} $color="#f0f6fc" $w={130}>31 commits</Text>
              <Text $size={24} $ls={-0.27}>to all branches.</Text>
            </Line>
          </Paragraph>
        </Card>
        <Card $pad="26px 34px 0 24px">
          <CardTitle>
            <Text $size={24} $weight={600} $ls={-0.37}>Top Committers</Text>
            <Octicon name="kebab" />
          </CardTitle>
          <Chart width="600" height="200">
            <text x="39" y="37.5">50</text>
            <line x1="81" y1="32.5" x2="609" y2="32.5" stroke="#2f353d" strokeWidth="1.5" strokeDasharray="6 4.5" />
            <text transform="translate(24 130) rotate(-90)">Commits</text>
          </Chart>
        </Card>
      </Cards>
    </Main>
  </Body>
);

/* ---------- taskbar ---------- */

const Taskbar = styled.div`
  height: 71px;
  flex: none;
  position: relative;
  border-top: 2px solid #45494c;
  padding-left: 748px;
  display: flex;
  align-items: center;
  background: linear-gradient(
    90deg,
    #14272e 0,
    #152a33 400px,
    #182c46 720px,
    #1a2b3c 840px,
    #1d2932 1080px,
    #232324 1240px,
    #252325 1480px,
    #1b272e 1600px,
    #162730 1700px,
    #152631 2100px,
    #142634 2561px
  );
`;

const TaskSlot = styled.div<{ $active?: boolean }>`
  position: relative;
  width: 66px;
  height: 69px;
  display: flex;
  align-items: center;
  justify-content: center;
  ${(p) =>
    p.$active &&
    css`
      &::before {
        content: '';
        position: absolute;
        inset: 4px 3px 5px;
        border: 1px solid rgba(255, 255, 255, 0.08);
        border-radius: 6px;
        background: rgba(255, 255, 255, 0.06);
      }
    `}
  & > svg { position: relative; }
`;

const RunDot = styled.div<{ $wide?: boolean }>`
  position: absolute;
  left: ${(p) => (p.$wide ? 21 : 28)}px;
  bottom: 6px;
  width: ${(p) => (p.$wide ? 24 : 9)}px;
  height: 5px;
  border-radius: 3px;
  background: ${(p) => (p.$wide ? '#4cc2ff' : '#989a9c')};
`;

const StartSlot = styled.div`
  padding: 1px 0 0 18px;
  width: 72px;
`;

const TaskSearch = styled.div`
  width: 330px;
  height: 48px;
  margin-right: 3px;
  padding: 0 8px 0 17px;
  border-radius: 24px;
  border: 1px solid #4b5660;
  border-top-color: #5c6670;
  background: #394551;
  display: flex;
  align-items: center;
  color: #d3d6d9;
`;

const TaskSearchLabel = styled.div`
  flex: 1;
  padding-left: 14px;
`;

const Tray = styled.div`
  margin-left: auto;
  display: flex;
  align-items: center;
  color: #fff;
  padding-right: 28px;
`;

const TrayItem = styled.div<{ $w: number }>`
  width: ${(p) => p.$w}px;
  display: flex;
  justify-content: center;
`;

const Clock = styled.div`
  width: 95px;
  margin-right: 14px;
  text-align: right;
  line-height: 24.5px;
  display: flex;
  flex-direction: column;
`;

const BluetoothPill = styled.div`
  width: 18px;
  height: 24px;
  border-radius: 8px;
  background: #0082fc;
  display: flex;
  align-items: center;
  justify-content: center;
`;

const WindowsLogo = () => (
  <svg width="36" height="36" viewBox="0 0 36 36">
    <defs>
      <linearGradient id="win" x1="0" y1="0" x2="1" y2="1">
        <stop offset="0" stopColor="#8ae3ff" />
        <stop offset="0.5" stopColor="#3fc4fb" />
        <stop offset="1" stopColor="#0a8fee" />
      </linearGradient>
    </defs>
    <path d="M1.5 0H17.2V17.2H0V1.500A1.500 1.500 0 0 1 1.500 0zM18.500 0H34a1.500 1.500 0 0 1 1.500 1.500V17.200H18.500zM0 18.500H17.200V35.500H1.500A1.500 1.500 0 0 1 0 34zM18.500 18.500H35.500V34a1.500 1.500 0 0 1-1.500 1.500H18.500z" fill="url(#win)" />
  </svg>
);

const SearchSpark = () => (
  <svg width="24" height="24" viewBox="0 0 24 24" fill="none">
    <path d="M11 1.600A8.400 8.400 0 1 0 15.500 16M15.800 16l6.200 6.500" stroke="#dbe2ff" strokeWidth="2" strokeLinecap="round" />
    <path d="M15.500.5l1.500 4 4 1.600-4 1.600-1.500 4-1.500-4-4-1.600 4-1.600zM20.300 9.500l1 2.600 2.500 1-2.500 1-1 2.600-1-2.600-2.500-1 2.500-1z" fill="#f5e9ff" />
  </svg>
);

const Saturn = () => (
  <svg width="72" height="42" viewBox="0 0 72 42">
    <defs>
      <radialGradient id="glow">
        <stop offset="0.6" stopColor="#15161c" />
        <stop offset="1" stopColor="#15161c" stopOpacity="0" />
      </radialGradient>
      <linearGradient id="planet" x1="0" y1="0" x2="0.3" y2="1">
        <stop offset="0" stopColor="#8a6a58" />
        <stop offset="0.4" stopColor="#e0a06a" />
        <stop offset="0.65" stopColor="#f0b070" />
        <stop offset="1" stopColor="#c06a28" />
      </linearGradient>
    </defs>
    <ellipse cx="36" cy="21" rx="36" ry="20" fill="url(#glow)" />
    <g transform="rotate(-9 36 22)" fill="none">
      <ellipse cx="36" cy="22" rx="26.5" ry="9.7" stroke="#7c6040" strokeWidth="3.5" />
      <ellipse cx="36" cy="22" rx="28" ry="11" stroke="#b9965f" strokeWidth="1.3" />
      <ellipse cx="36" cy="22" rx="23" ry="7.5" stroke="#cba878" strokeWidth="1.4" />
    </g>
    <path d="M23.5 20a12 13.500 0 0 1 24 0l-.5 6c-7 3.500-17 4-23 1.500z" fill="url(#planet)" />
    <g transform="rotate(-9 36 22)" fill="none">
      <path d="M9.500 22a26.500 9.700 0 0 0 53 0" stroke="#8f7048" strokeWidth="3.2" />
      <path d="M8 22a28 11 0 0 0 56 0" stroke="#c9a574" strokeWidth="1.2" />
      <path d="M13 22a23 7.500 0 0 0 46 0" stroke="#dcbc8c" strokeWidth="1.2" />
    </g>
    <g fill="#fff3cf">
      <circle cx="22" cy="3.500" r="1" /><circle cx="16" cy="6.500" r=".8" /><circle cx="11" cy="35" r="1" />
      <circle cx="27" cy="37.500" r="1" /><circle cx="55" cy="34" r="1.500" /><circle cx="59" cy="35.500" r=".8" /><circle cx="68" cy="18" r="1" />
    </g>
  </svg>
);

const TaskView = () => (
  <svg width="37" height="35" viewBox="0 0 37 35">
    <rect x="0" y="9" width="27" height="25" rx="1.5" fill="#6b6b6c" />
    <rect x="9" y="0" width="27.500" height="25" rx="1.5" fill="#f0f0f0" />
    <rect x="9" y="9" width="18" height="16" fill="#b3b3b4" />
  </svg>
);

const Chrome = () => (
  <svg width="36" height="36" viewBox="0 0 48 48">
    <path d="M24 12H44.8A24 24 0 0 0 3.2 12L13.6 30z" fill="#e33b2e" />
    <path d="M3.2 12A24 24 0 0 0 24 48L34.4 30A12 12 0 0 1 13.6 30z" fill="#229342" />
    <path d="M24 48A24 24 0 0 0 44.8 12H24a12 12 0 0 1 10.400 18z" fill="#fbc116" />
    <circle cx="24" cy="24" r="11.8" fill="#fff" />
    <circle cx="24" cy="24" r="9.2" fill="#2f7bea" />
  </svg>
);

const Folder = () => (
  <svg width="36" height="34" viewBox="0 0 36 34">
    <defs>
      <linearGradient id="fold" x1="0" y1="0" x2="1" y2="1">
        <stop offset="0" stopColor="#ffe06e" /><stop offset="1" stopColor="#f9b915" />
      </linearGradient>
    </defs>
    <path d="M1.500.5h9.500a3 3 0 0 1 2 1l2.500 2.500H20V14H0V2A1.500 1.500 0 0 1 1.500.5z" fill="#dc9b05" />
    <path d="M0 6h11.500a3 3 0 0 0 2-1l1-1A3 3 0 0 1 16.700 3.300H34.500A1.500 1.500 0 0 1 36 4.800V32a1.500 1.500 0 0 1-1.500 1.500h-33A1.500 1.500 0 0 1 0 32z" fill="url(#fold)" />
    <path d="M6 33.500V26a4 4 0 0 1 4-4H26a4 4 0 0 1 4 4v7.500z" fill="#0f78cf" />
    <path d="M11.500 27.500h13.500" stroke="#08406f" strokeWidth="1.8" strokeLinecap="round" />
  </svg>
);

const Gear = () => (
  <svg width="37" height="36" viewBox="0 0 37 36">
    <g fill="#7d8791">
      <circle cx="18.5" cy="18" r="13.500" />
      {[0, 60, 120].map((a) => (
        <path key={a} d="M.5 14.500L7 12.500v11L.5 21.500zM36.500 14.500L30 12.500v11l6.500-2z" transform={`rotate(${a} 18.5 18)`} />
      ))}
    </g>
    <circle cx="18.5" cy="18" r="9.2" fill="#f2f4f6" />
    <circle cx="18.5" cy="18" r="6.2" fill="#0f62b0" />
  </svg>
);

const Firefox = () => (
  <svg width="36" height="36" viewBox="0 0 36 36">
    <defs>
      <linearGradient id="ff" x1="0.8" y1="0" x2="0.3" y2="1">
        <stop offset="0" stopColor="#fff44f" /><stop offset="0.35" stopColor="#ffa436" />
        <stop offset="0.65" stopColor="#ff4f45" /><stop offset="1" stopColor="#e31587" />
      </linearGradient>
    </defs>
    <path d="M22 .5c3 2 4 5 4.500 7.500l2-1.500c3.500 3.500 6 8 6 13.500a16.700 15.700 0 0 1-33.500-.5c0-4 1-7 3-9.500l.3-3.800 3.500 4.300 4.200-3 1 3.500c3-.5 4-1 5-3C18.800 5.500 20 3 22 .5z" fill="url(#ff)" />
    <circle cx="18" cy="19.5" r="7.2" fill="#8a3fe8" />
    <path d="M5 13c4-3.500 9-2 11.500 1.200 1.500.8 3.500.5 4 1-.5 2.500-4 2.500-5.500 3.500-1.200 1-1.500 2.500-1 4-4-.5-6-4-9-9.700z" fill="#ff8a2a" />
  </svg>
);

const Proton = () => (
  <svg width="37" height="36" viewBox="0 0 37 36">
    <defs>
      <linearGradient id="pv1" x1="0" y1="0" x2="0.6" y2="1">
        <stop offset="0" stopColor="#6d4aff" /><stop offset="0.5" stopColor="#6b6cf5" /><stop offset="1" stopColor="#2fe0b8" />
      </linearGradient>
      <linearGradient id="pv2" x1="1" y1="0" x2="0.3" y2="1">
        <stop offset="0" stopColor="#b9a5ff" /><stop offset="0.5" stopColor="#b3c4fa" /><stop offset="1" stopColor="#a8f5e0" />
      </linearGradient>
    </defs>
    <path d="M1 1.500C1.500 1 2.500.6 4 .8L34 4.500c2.500.3 3.500 2.500 2.200 4.500L20.500 34c-1.200 2-3.800 2-5 0L.8 4.500C.3 3.400.4 2.200 1 1.500z" fill="url(#pv2)" />
    <path d="M.8 3.800L26 6.800c2 .3 2.800 2 1.800 3.700L16.500 30c-.5.9-1.500.9-2 0z" fill="url(#pv1)" />
  </svg>
);

const BraveBadge = styled.div`
  display: grid;
  place-items: center;
  & > svg { grid-area: 1 / 1; }
`;

const Brave = () => (
  <BraveBadge>
    <svg width="38" height="38" viewBox="0 0 38 38"><path d="M9 10h20l1 8-4 10-7 5-7-5-4-10z" fill="#fff" /></svg>
    <SiBrave size={37} color="#fb4519" />
  </BraveBadge>
);

const Notepad = () => (
  <svg width="28" height="37" viewBox="0 0 28 37">
    <rect x="0" y="30" width="28" height="6.500" rx="1.5" fill="#b5560f" />
    <rect x="0" y="29" width="28" height="4" fill="#f2efe9" />
    <rect x="0" y="1.500" width="28" height="29.500" rx="1.5" fill="#52bfdc" />
    <path d="M4.500 0v5M11 0v5M17.500 0v5M24 0v5" stroke="#0b5f84" strokeWidth="2.4" />
    <path d="M5.500 11.500h17M5.500 18h17M5.500 24h17" stroke="#0a6288" strokeWidth="2" strokeLinecap="round" />
  </svg>
);

const Snip = () => (
  <svg width="37" height="37" viewBox="0 0 37 37">
    <rect x="0" y="0" width="27" height="27.500" rx="3" fill="#eceff2" />
    <g fill="#d83b01">
      <rect x="3" y="3" width="4" height="4" /><rect x="9" y="3" width="4" height="4" /><rect x="15" y="3" width="4" height="4" />
      <rect x="3" y="9" width="4" height="4" /><rect x="3" y="15" width="4" height="4" />
    </g>
    <path d="M21.500 8v15M8 21.500h15" stroke="#8d979f" strokeWidth="3" />
    <path d="M21.500 20l-2 10M20 21.500l9-1.500" stroke="#9aa4ab" strokeWidth="2.5" />
    <g fill="none" stroke="#1b9be0" strokeWidth="2.4"><circle cx="32" cy="19.500" r="3.4" /><circle cx="19.500" cy="33" r="3.4" /></g>
  </svg>
);

const WordBox = styled.div`
  position: relative;
  width: 36px;
  height: 34px;
  border-radius: 2px;
  background: linear-gradient(#41a5ee 25%, #2b7cd3 25% 50%, #185abd 50% 75%, #103f91 75%) no-repeat 8px 0 / 28px 34px;
`;

const WordTile = styled.div`
  position: absolute;
  left: 0;
  top: 8px;
  width: 19px;
  height: 18px;
  border-radius: 2px;
  background: #1651b0;
  color: #fff;
  font-size: 14px;
  font-weight: 700;
  line-height: 18px;
  text-align: center;
`;

const TaskbarView = () => (
  <Taskbar>
    <StartSlot><WindowsLogo /></StartSlot>
    <TaskSearch>
      <SearchSpark />
      <TaskSearchLabel><Text $size={21} $ls={-0.4}>Search</Text></TaskSearchLabel>
      <Saturn />
    </TaskSearch>
    <TaskSlot><TaskView /></TaskSlot>
    <TaskSlot $active><Chrome /><RunDot $wide /></TaskSlot>
    <TaskSlot><Folder /><RunDot /></TaskSlot>
    <TaskSlot><Gear /></TaskSlot>
    <TaskSlot><Firefox /></TaskSlot>
    <TaskSlot><Proton /></TaskSlot>
    <TaskSlot><Brave /></TaskSlot>
    <TaskSlot><Notepad /><RunDot /></TaskSlot>
    <TaskSlot><Snip /><RunDot /></TaskSlot>
    <TaskSlot><WordBox><WordTile>W</WordTile></WordBox><RunDot /></TaskSlot>
    <Tray>
      <TrayItem $w={48}>
        <svg width="17" height="10" viewBox="0 0 17 10" fill="none" stroke="#fff" strokeWidth="2"><path d="M1 9l7.500-7.500L16 9" /></svg>
      </TrayItem>
      <TrayItem $w={48}>
        <svg width="25" height="17" viewBox="0 0 25 17">
          <path d="M5.500 13a6.800 6.800 0 0 1 13-8.500c4 .5 4 4 4 6z" fill="#8e959b" />
          <path d="M0 11.500A5.500 5.500 0 0 1 8 6.500l8 6.500-3 3.500H5A5 5 0 0 1 0 11.500z" fill="#c6cacd" />
          <path d="M2 15.500l14-8a7 7 0 0 1 4-.3 5 5 0 0 1-.5 9.600H5.500c-1.500 0-2.500-.5-3.500-1.300z" fill="#fff" />
        </svg>
      </TrayItem>
      <TrayItem $w={48}><BluetoothPill><MdBluetooth size={21} /></BluetoothPill></TrayItem>
      <TrayItem $w={48}>
        <svg width="25" height="18" viewBox="0 0 25 18" fill="none" stroke="#fff" strokeWidth="1.9" strokeLinecap="round">
          <path d="M1 7a16.500 16.500 0 0 1 23 0M4.500 10.500a11.500 11.500 0 0 1 16 0M8 13.500a6.500 6.500 0 0 1 9 0" />
          <circle cx="12.5" cy="16" r="1.2" fill="#fff" />
        </svg>
      </TrayItem>
      <TrayItem $w={24}>
        <svg width="25" height="20" viewBox="0 0 25 20" fill="none" stroke="#fff" strokeWidth="1.6" strokeLinecap="round" strokeLinejoin="round">
          <path d="M1 7v6h4l5 4.500v-15L5 7zM14 6.500a6 6 0 0 1 0 7M17.500 4a10 10 0 0 1 0 12M21 1.500a14 14 0 0 1 0 17" />
        </svg>
      </TrayItem>
      <TrayItem $w={48}>
        <svg width="25" height="21" viewBox="0 0 25 21">
          <path d="M9 6.500h10a2.500 2.500 0 0 1 2.500 2.500v8a2.500 2.500 0 0 1-2.500 2.500H4A2.500 2.500 0 0 1 1.500 17v-5" fill="none" stroke="#fff" strokeWidth="1.8" />
          <path d="M8 9h10.500v8H4v-3.500zM22 10.500h1.500a1 1 0 0 1 1 1v3a1 1 0 0 1-1 1H22z" fill="#fff" />
          <path d="M5 0L0 8h3l-1 5 6-8H5z" fill="#fff" stroke="#152631" strokeWidth=".6" />
        </svg>
      </TrayItem>
      <Clock>
        <Text $size={18} $ls={0.12}>9:13 AM</Text>
        <Text $size={18} $ls={0.13}>9/21/2025</Text>
      </Clock>
      <svg width="22" height="25" viewBox="0 0 22 25">
        <path d="M10 1.500a7.300 7.300 0 0 0-7.500 7.300V14L0 19.500h20L17.500 14V9A7.300 7.300 0 0 0 10 1.500zM6.500 21a3.700 3.700 0 0 0 7 0z" fill="#fff" />
        <path d="M7 8h6l-6 7.500h6" fill="none" stroke="#152631" strokeWidth="1.9" />
        <path d="M13.500 0H22v9h-7z" fill="#152631" />
        <path d="M15.500 1.800h5l-5 6.200h5" fill="none" stroke="#fff" strokeWidth="1.8" />
      </svg>
    </Tray>
  </Taskbar>
);

/* ---------- app ---------- */

export default function App() {
  return (
    <>
      <GlobalStyle />
      <Frame>
        <Tabs />
        <BrowserToolbar />
        <Viewport>
          <Page>
            <Header />
            <RepoHeader />
            <Insights />
          </Page>
          <ScrollTrack>
            <svg width="15" height="12" viewBox="0 0 15 12"><path d="M7.500 0L15 12H0z" fill="#9f9f9f" /></svg>
            <ScrollThumb />
            <svg width="15" height="11" viewBox="0 0 15 11"><path d="M7.500 11L15 0H0z" fill="#9f9f9f" /></svg>
          </ScrollTrack>
        </Viewport>
        <TaskbarView />
      </Frame>
    </>
  );
}
